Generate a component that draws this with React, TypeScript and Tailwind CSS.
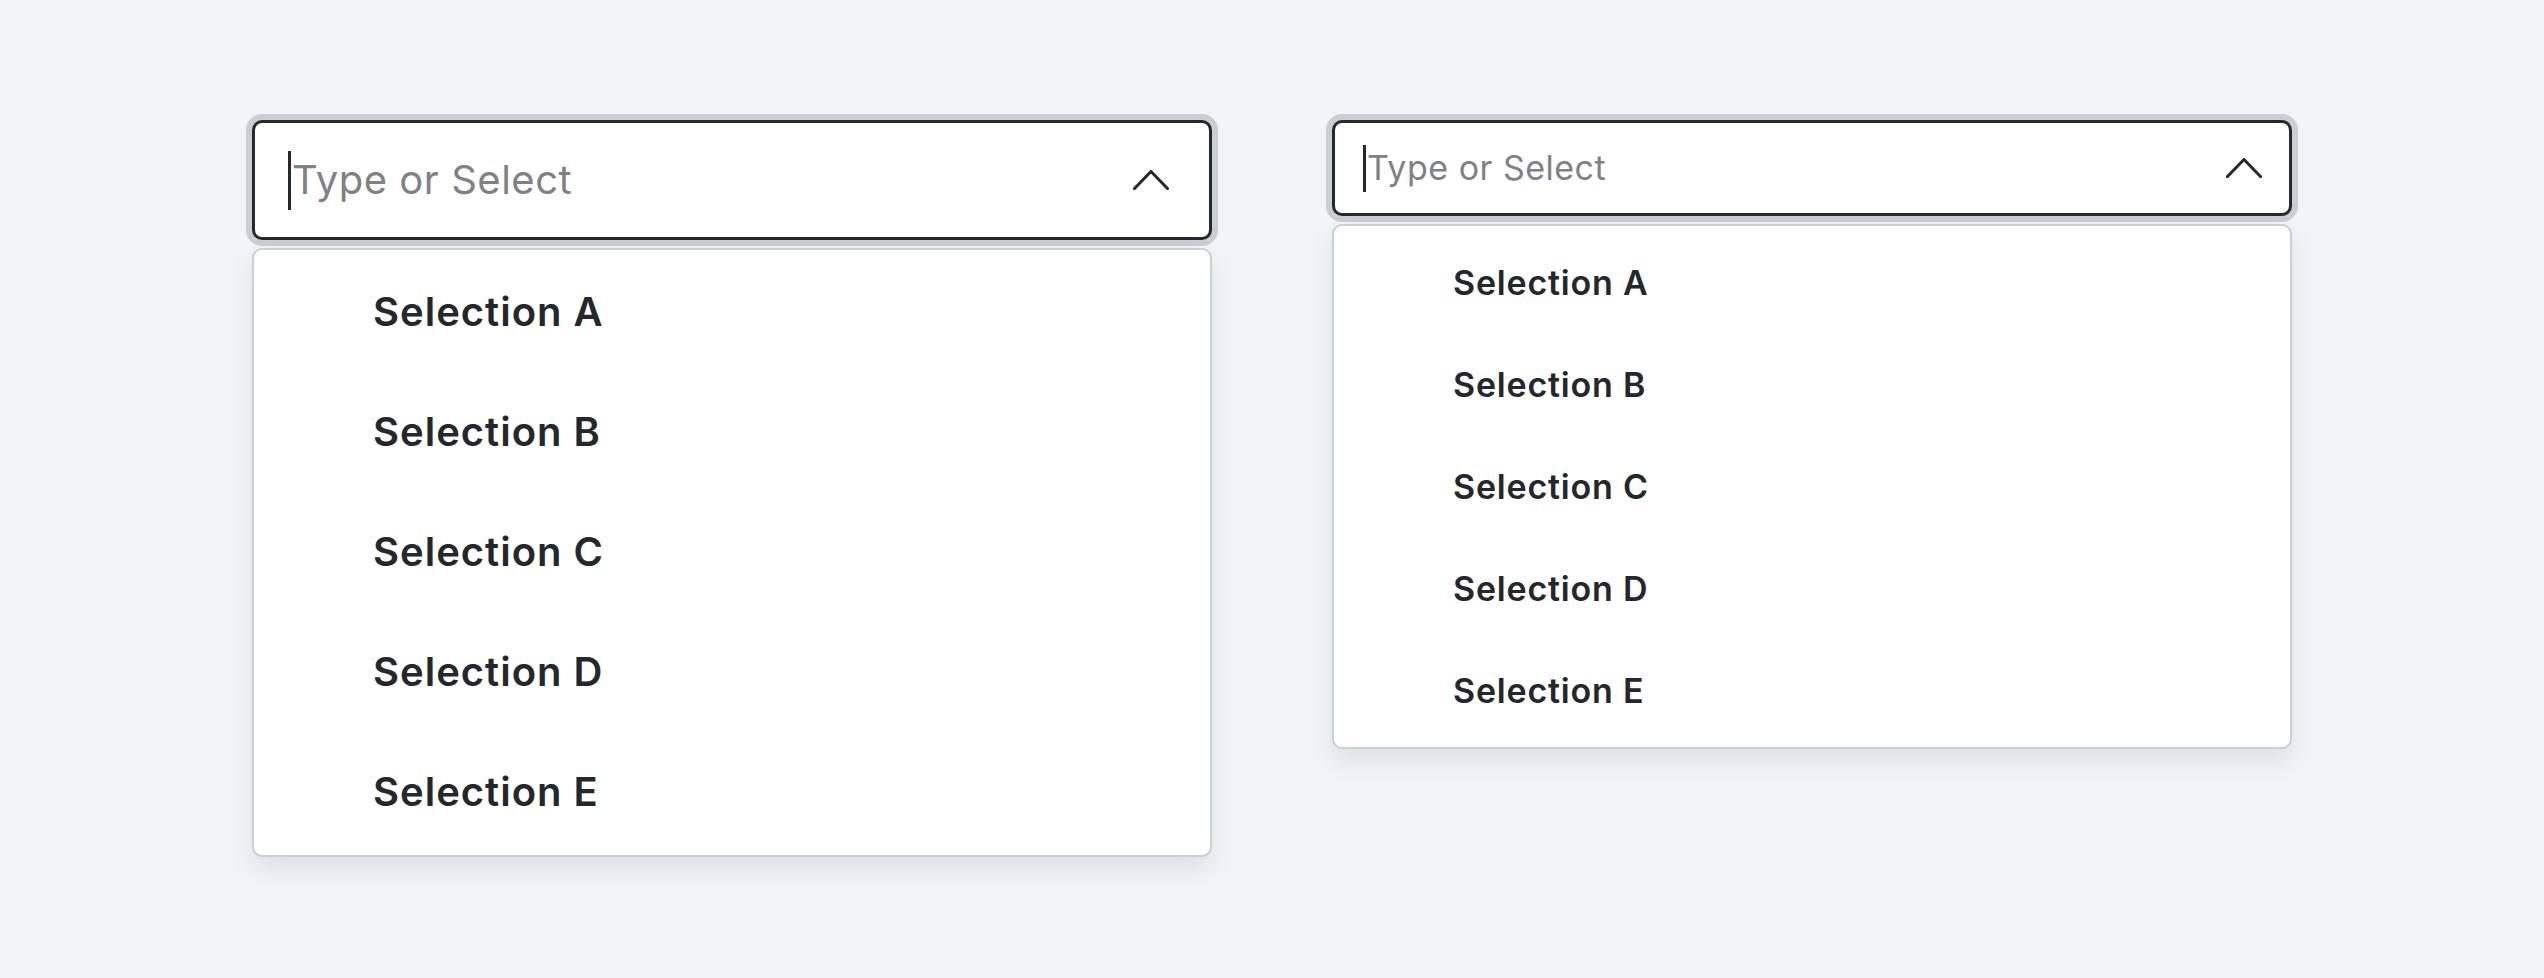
import React from "react";

const items = ["Selection A", "Selection B", "Selection C", "Selection D", "Selection E"];

function Chevron({ w, h }: { w: number; h: number }) {
  return (
    <svg width={w} height={h} viewBox={`0 0 ${w} ${h}`} fill="none">
      <polyline
        points={`1.5,${h - 1.5} ${w / 2},1.5 ${w - 1.5},${h - 1.5}`}
        stroke="#25282d"
        strokeWidth="3"
        strokeLinecap="square"
        strokeLinejoin="miter"
      />
    </svg>
  );
}

function Large() {
  return (
    <div className="flex w-[960px] flex-col gap-[8px]">
      <div className="flex h-[120px] items-center rounded-[10px] border-[3px] border-[#25282d] bg-white pl-[33px] pr-[40px] shadow-[0_0_0_6px_#cbced3]">
        <div className="h-[59px] w-[3px] bg-[#25282d]" />
        <span className="ml-[1px] flex-1 text-[40px] leading-none tracking-[0.5px] text-[#7f8185]">Type or Select</span>
        <Chevron w={36} h={20} />
      </div>
      <div className="rounded-[10px] border-2 border-[#cbced3] bg-white pt-[2px] pb-[3px] shadow-[0_12px_26px_rgba(30,40,60,0.10)]">
        {items.map((t) => (
          <div key={t} className="flex h-[120px] items-center pl-[119px] text-[40px] font-[560] tracking-[1px] text-[#24272c]">
            {t}
          </div>
        ))}
      </div>
    </div>
  );
}

function Small() {
  return (
    <div className="flex w-[960px] flex-col gap-[8px]">
      <div className="flex h-[96px] items-center rounded-[10px] border-[3px] border-[#25282d] bg-white pl-[28px] pr-[27px] shadow-[0_0_0_6px_#cbced3]">
        <div className="h-[47px] w-[3px] bg-[#25282d]" />
        <span className="ml-[1px] flex-1 text-[34px] leading-none tracking-[0.5px] text-[#7f8185]">Type or Select</span>
        <Chevron w={36} h={20} />
      </div>
      <div className="rounded-[10px] border-2 border-[#cbced3] bg-white pt-[5px] pb-[6px] shadow-[0_12px_26px_rgba(30,40,60,0.10)]">
        {items.map((t) => (
          <div key={t} className="flex h-[102px] items-center pl-[119px] text-[34px] font-[560] tracking-[0.8px] text-[#24272c]">
            {t}
          </div>
        ))}
      </div>
    </div>
  );
}

export default function App() {
  return (
    <div
      className="flex h-[978px] w-[2544px] items-start justify-center gap-[120px] bg-[#f2f5f8] pt-[120px]"
      style={{ fontFamily: "Inter, 'Noto Sans', sans-serif" }}
    >
      <Large />
      <Small />
    </div>
  );
}
